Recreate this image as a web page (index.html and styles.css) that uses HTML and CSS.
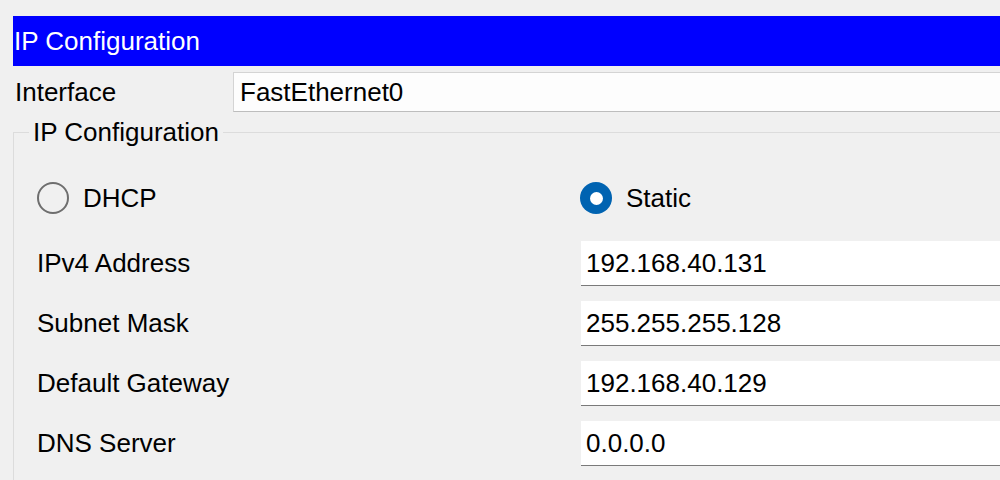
FILE: index.html
```html
<!DOCTYPE html>
<html lang="en">
<head>
<meta charset="utf-8">
<title>IP Configuration</title>
<link rel="stylesheet" href="styles.css">
</head>
<body>
<div class="window">
  <div class="titlebar">IP Configuration</div>
  <div class="iface-row">
    <span class="iface-label">Interface</span>
    <div class="iface-box">FastEthernet0</div>
  </div>
  <fieldset class="group">
    <legend class="group-title">IP Configuration</legend>
    <div class="group-body">
      <div class="grid">
        <label class="radio radio-first"><span class="radio-dot"></span>DHCP</label>
        <label class="radio radio-second"><span class="radio-dot checked"></span>Static</label>

        <span class="field-label">IPv4 Address</span>
        <div class="field">192.168.40.131</div>

        <span class="field-label">Subnet Mask</span>
        <div class="field">255.255.255.128</div>

        <span class="field-label">Default Gateway</span>
        <div class="field">192.168.40.129</div>

        <span class="field-label">DNS Server</span>
        <div class="field">0.0.0.0</div>
      </div>
    </div>
  </fieldset>
</div>
</body>
</html>
```

FILE: styles.css
```css
html, body {
  margin: 0;
  background: #f0f0f0;
  overflow: hidden;
}

body {
  font-family: "Liberation Sans", Arial, sans-serif;
  font-size: 26px;
  color: #000;
}

.window {
  padding: 16px 0 0 13px;
}

.titlebar {
  height: 50px;
  line-height: 50px;
  padding-left: 1px;
  background: #0000ff;
  color: #fff;
  white-space: nowrap;
}

.iface-row {
  display: flex;
  align-items: center;
  height: 40px;
  margin-top: 6px;
}

.iface-label {
  width: 220px;
  padding-left: 2px;
  box-sizing: border-box;
  flex: none;
}

.iface-box {
  flex: 1;
  height: 40px;
  box-sizing: border-box;
  display: flex;
  align-items: center;
  padding-left: 6px;
  background: #fdfdfd;
  border: 1px solid #d4d4d4;
  border-bottom-color: #bdbdbd;
  border-right: none;
}

.group {
  margin: 6px -40px 0 0;
  padding: 0;
  border: 1px solid #dcdcdc;
  min-width: 0;
}

.group-title {
  margin-left: 15px;
  padding: 0 4px;
  line-height: 29px;
}

.group-body {
  padding: 28px 0 60px 23px;
}

.grid {
  display: grid;
  grid-template-columns: 544px 1fr;
  row-gap: 15px;
  align-items: center;
}

.radio {
  display: flex;
  align-items: center;
  gap: 14px;
  height: 46px;
  margin-bottom: 5px;
}

.radio-second {
  margin-left: -1px;
}

.radio-dot {
  width: 32px;
  height: 32px;
  box-sizing: border-box;
  border-radius: 50%;
  border: 2px solid #6e6e6e;
  flex: none;
  display: flex;
  align-items: center;
  justify-content: center;
}

.radio-dot.checked {
  border: none;
  background: #0063b1;
}

.radio-dot.checked::after {
  content: "";
  width: 13px;
  height: 13px;
  border-radius: 50%;
  background: #fff;
}

.field-label {
  white-space: nowrap;
}

.field {
  height: 45px;
  box-sizing: border-box;
  display: flex;
  align-items: center;
  padding-left: 5px;
  background: #fff;
  border-bottom: 1px solid #7a7a7a;
}
```
